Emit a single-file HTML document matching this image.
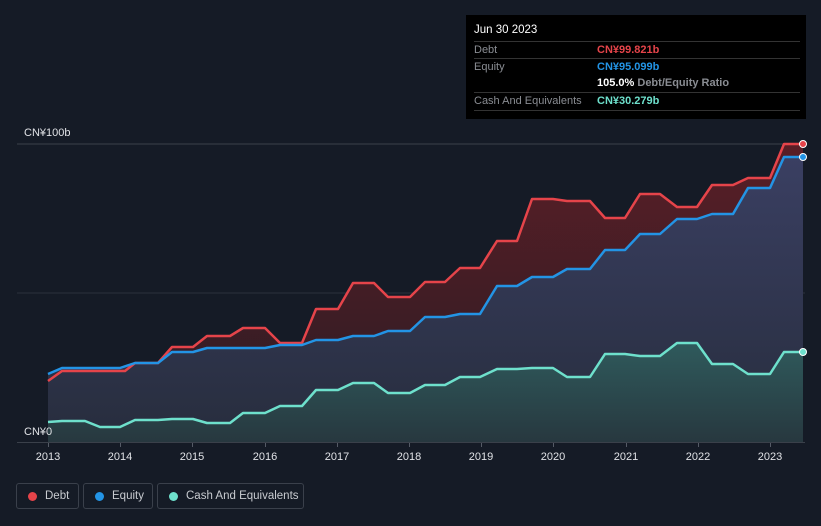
<!DOCTYPE html>
<html><head><meta charset="utf-8"><style>
html,body{margin:0;width:821px;height:526px;overflow:hidden}
body{background:#151b26;font-family:"Liberation Sans",sans-serif;position:relative}
.tt{position:absolute;left:466px;top:15px;width:340px;height:104px;background:#000;color:#fff;font-size:11px}
.tt .r{position:absolute;left:8px;right:6px;border-top:1px solid #333;height:17px;line-height:17px;color:#8a8d93}
.tt .v{position:absolute;left:123px;font-weight:bold}
.lg{position:absolute;top:483px;height:26px;border:1px solid #3a404b;border-radius:3px;color:#c8cbd0;font-size:11.5px;line-height:24px;box-sizing:border-box;white-space:nowrap}
.lg i{position:absolute;left:11px;top:8px;width:9px;height:9px;border-radius:50%}
.lg span{position:absolute;left:28px}
</style></head><body>
<svg width="821" height="526" style="position:absolute;left:0;top:0">
<defs>
<linearGradient id="gd" x1="0" y1="0" x2="0" y2="1"><stop offset="0" stop-color="#5a1e26"/><stop offset="1" stop-color="#2a1c24"/></linearGradient>
<linearGradient id="ge" x1="0" y1="0" x2="0" y2="1"><stop offset="0" stop-color="#3a3f62"/><stop offset="1" stop-color="#272d3d"/></linearGradient>
<linearGradient id="gc" x1="0" y1="0" x2="0" y2="1"><stop offset="0" stop-color="#2f5a5c"/><stop offset="1" stop-color="#27383f"/></linearGradient>
</defs>
<line x1="17" y1="144" x2="805" y2="144" stroke="#3a404a"/>
<line x1="17" y1="293" x2="805" y2="293" stroke="#2c323c"/>
<polygon fill="url(#gd)" points="48,442 48,381 62,371 95,371 110,371 125,371 135,363 158,363 172,347 193,347 207,336 230,336 243,328 265,328 280,343 302,343 316,309 338,309 353,283 374,283 388,297 410,297 425,282 445,282 460,268 480,268 497,241 517,241 532,199 553,199 567,201 590,201 605,218 625,218 640,194 660,194 677,207 697,207 712,185 733,185 748,178 770,178 784,144 803,144 803,442"/>
<polygon fill="url(#ge)" points="48,442 48,374 62,368 95,368 120,368 135,363 158,363 172,352 193,352 207,348 265,348 280,345 302,345 316,340 338,340 353,336 374,336 388,331 410,331 425,317 445,317 460,314 480,314 497,286 517,286 532,277 553,277 567,269 590,269 605,250 625,250 640,234 660,234 677,219 697,219 712,214 733,214 748,188 770,188 784,157 803,157 803,442"/>
<polygon fill="url(#gc)" points="48,442 48,422 62,421 85,421 100,427 120,427 135,420 158,420 172,419 193,419 207,423 230,423 243,413 265,413 280,406 302,406 316,390 338,390 353,383 374,383 388,393 410,393 425,385 445,385 460,377 480,377 497,369 517,369 532,368 553,368 567,377 590,377 605,354 625,354 640,356 660,356 677,343 697,343 712,364 733,364 748,374 770,374 784,352 803,352 803,442"/>
<g fill="none" stroke-width="2.5" stroke-linejoin="round">
<polyline stroke="#e5444a" points="48,381 62,371 95,371 110,371 125,371 135,363 158,363 172,347 193,347 207,336 230,336 243,328 265,328 280,343 302,343 316,309 338,309 353,283 374,283 388,297 410,297 425,282 445,282 460,268 480,268 497,241 517,241 532,199 553,199 567,201 590,201 605,218 625,218 640,194 660,194 677,207 697,207 712,185 733,185 748,178 770,178 784,144 803,144"/>
<polyline stroke="#2394e5" points="48,374 62,368 95,368 120,368 135,363 158,363 172,352 193,352 207,348 265,348 280,345 302,345 316,340 338,340 353,336 374,336 388,331 410,331 425,317 445,317 460,314 480,314 497,286 517,286 532,277 553,277 567,269 590,269 605,250 625,250 640,234 660,234 677,219 697,219 712,214 733,214 748,188 770,188 784,157 803,157"/>
<polyline stroke="#6ee0cc" points="48,422 62,421 85,421 100,427 120,427 135,420 158,420 172,419 193,419 207,423 230,423 243,413 265,413 280,406 302,406 316,390 338,390 353,383 374,383 388,393 410,393 425,385 445,385 460,377 480,377 497,369 517,369 532,368 553,368 567,377 590,377 605,354 625,354 640,356 660,356 677,343 697,343 712,364 733,364 748,374 770,374 784,352 803,352"/>
</g>
<circle cx="803" cy="144" r="3.5" fill="#e5444a" stroke="#fff" stroke-width="1"/>
<circle cx="803" cy="157" r="3.5" fill="#2394e5" stroke="#fff" stroke-width="1"/>
<circle cx="803" cy="352" r="3.5" fill="#6ee0cc" stroke="#fff" stroke-width="1"/>
<line x1="17" y1="442.5" x2="805" y2="442.5" stroke="#3a404a"/>
<g stroke="#555b66">
<line x1="48.5" y1="443" x2="48.5" y2="447"/><line x1="120.5" y1="443" x2="120.5" y2="447"/><line x1="192.5" y1="443" x2="192.5" y2="447"/><line x1="265.5" y1="443" x2="265.5" y2="447"/><line x1="337.5" y1="443" x2="337.5" y2="447"/><line x1="409.5" y1="443" x2="409.5" y2="447"/><line x1="481.5" y1="443" x2="481.5" y2="447"/><line x1="553.5" y1="443" x2="553.5" y2="447"/><line x1="626.5" y1="443" x2="626.5" y2="447"/><line x1="698.5" y1="443" x2="698.5" y2="447"/><line x1="770.5" y1="443" x2="770.5" y2="447"/>
</g>
<g fill="#e0e2e6" font-size="11" text-anchor="middle" font-family="Liberation Sans">
<text x="48" y="460">2013</text><text x="120" y="460">2014</text><text x="192" y="460">2015</text><text x="265" y="460">2016</text><text x="337" y="460">2017</text><text x="409" y="460">2018</text><text x="481" y="460">2019</text><text x="553" y="460">2020</text><text x="626" y="460">2021</text><text x="698" y="460">2022</text><text x="770" y="460">2023</text>
</g>
<text x="24" y="136" fill="#e0e2e6" font-size="11" font-family="Liberation Sans">CN¥100b</text>
<text x="24" y="435" fill="#e0e2e6" font-size="11" font-family="Liberation Sans">CN¥0</text>
</svg>
<div class="tt">
<div style="position:absolute;left:8px;top:9px;font-size:11.5px">Jun 30 2023</div>
<div class="r" style="top:26px">Debt<span class="v" style="color:#e5444a">CN¥99.821b</span></div>
<div class="r" style="top:43px">Equity<span class="v" style="color:#2394e5">CN¥95.099b</span></div>
<div class="r" style="top:60px;border-top:none"><span class="v" style="color:#fff">105.0% <span style="color:#8a8d93">Debt/Equity Ratio</span></span></div>
<div class="r" style="top:77px">Cash And Equivalents<span class="v" style="color:#6ee0cc">CN¥30.279b</span></div>
<div class="r" style="top:95px;height:0"></div>
</div>
<div class="lg" style="left:16px;width:63px"><i style="background:#e5444a"></i><span>Debt</span></div>
<div class="lg" style="left:83px;width:70px"><i style="background:#2394e5"></i><span>Equity</span></div>
<div class="lg" style="left:157px;width:147px"><i style="background:#6ee0cc"></i><span>Cash And Equivalents</span></div>
</body></html>
